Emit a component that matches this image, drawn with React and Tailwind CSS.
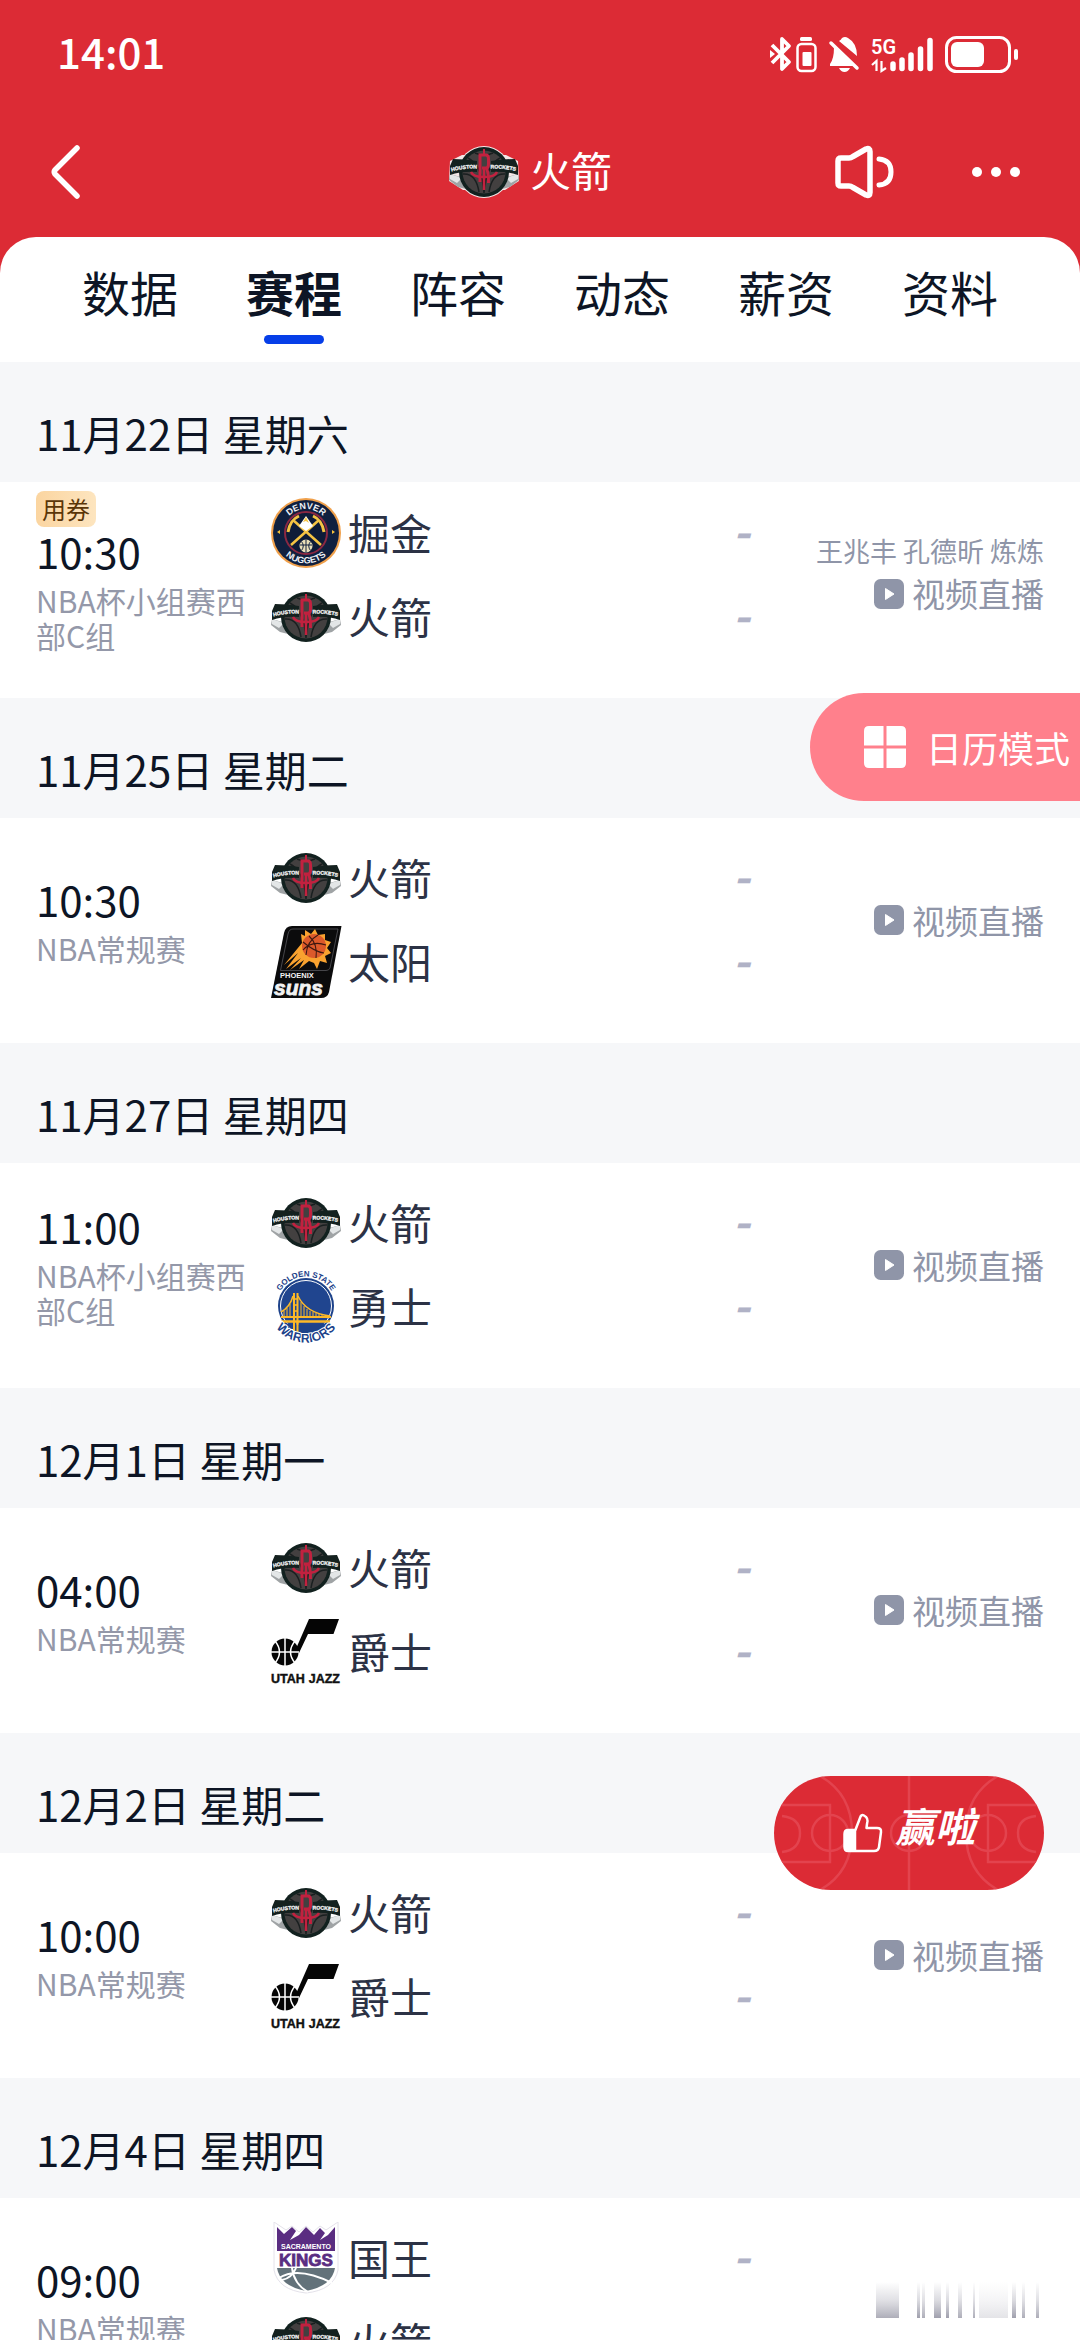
function RocketsLogo({ outlined = false }) {
  return (
    <svg viewBox="0 0 72 72" className="size-[72px] shrink-0" aria-hidden="true">
      {outlined && (
        <g fill="#f3e6e6">
          <circle cx="36" cy="36" r="26" />
          <path d="M2 25 L14 19 H58 L70 25 L71 45 L57 54 H15 L1 45 Z" />
        </g>
      )}
      <g transform="translate(0 1)">
        <path d="M2 37 L16 41 L18 52 L10 50 L1 43 Z" fill="#9fa3a5" />
        <path d="M70 37 L56 41 L54 52 L62 50 L71 43 Z" fill="#9fa3a5" />
        <path d="M2 37 L14 41 L9 46 L2 42 Z" fill="#e3e6e7" />
        <path d="M70 37 L58 41 L63 46 L70 42 Z" fill="#e3e6e7" />
        <circle cx="36" cy="35" r="25" fill="#12211f" />
        <circle cx="36" cy="35" r="21.500" fill="#434040" />
        <g fill="none" stroke="#1a1f20" strokeWidth="1.500">
          <path d="M20 21 Q34 28 36 56 M52 21 Q38 28 36 56 M15 37 Q28 36 31 55 M57 37 Q44 36 41 55 M27 16 Q36 20 45 16" />
        </g>
        <path d="M2 29 L5 22 Q17 22 29 24 V35 Q14 34 2 38 Z" fill="#14211f" />
        <path d="M70 29 L67 22 Q55 22 43 24 V35 Q58 34 70 38 Z" fill="#14211f" />
        <defs>
          <path id="houston" d="M3.500 34.500 Q16 31 31 31.500" />
          <path id="rockets" d="M42.500 31.500 Q56 31 70 34.500" />
        </defs>
        <g fill="#f4f5f5" stroke="#f4f5f5" strokeWidth="0.300" fontFamily="Liberation Sans, sans-serif" fontWeight="700" fontSize="5.200">
          <text><textPath href="#houston">HOUSTON</textPath></text>
          <text><textPath href="#rockets">ROCKETS</textPath></text>
        </g>
        <g fill="none" stroke="#c2213f">
          <path d="M32 45 V18 H38 Q40.500 18 40.500 22 V27 Q40.500 31 38 31 H34" strokeWidth="3" />
          <path d="M36 31 V53" strokeWidth="2.500" />
          <path d="M38 31 Q40.500 33 40.500 46" strokeWidth="3" />
          <path d="M23 35 Q25 40 36 40 Q47 40 49 35" strokeWidth="2.500" />
          <path d="M36 12 V18" strokeWidth="2" />
        </g>
      </g>
    </svg>
  );
}

function NuggetsLogo() {
  return (
    <svg viewBox="0 0 72 72" className="size-[72px] shrink-0" aria-hidden="true">
      <circle cx="36" cy="36" r="35" fill="#f0a04b" />
      <circle cx="36" cy="36" r="33" fill="#10203f" />
      <circle cx="36" cy="36" r="21" fill="#0e1c38" stroke="#8a2842" strokeWidth="2" />
      <defs>
        <path id="denver" d="M12 36 A24 24 0 0 1 60 36" />
        <path id="nuggets" d="M5.500 36 A30.500 30.500 0 0 0 66.500 36" />
      </defs>
      <g fill="#eef1f6" fontFamily="Liberation Sans, sans-serif" fontWeight="700" fontSize="9" textAnchor="middle">
        <text><textPath href="#denver" startOffset="50%">DENVER</textPath></text>
        <text><textPath href="#nuggets" startOffset="50%">NUGGETS</textPath></text>
      </g>
      <path d="M7 35 l3 -2 v4 z M65 35 l-3 -2 v4 z" fill="#f7c23c" />
      <g stroke="#f5c443" strokeWidth="2.500" fill="none">
        <path d="M21 48 L49 23 M51 48 L23 23" />
        <path d="M18 35 Q20 23 29 19" strokeWidth="3" />
        <path d="M54 35 Q52 23 43 19" strokeWidth="3" />
      </g>
      <path d="M29 29 L36 19 L43 29 L36 34 Z" fill="#fff" />
      <path d="M33 25 L36 20 L39 26 L36 24 Z" fill="#f5c443" />
      <circle cx="36" cy="49" r="6.500" fill="#e9dfb9" />
      <path d="M30 48 H42 M36 42.500 V55.500 M31.500 44.500 Q35 49 31.500 53.500 M40.500 44.500 Q37 49 40.500 53.500" stroke="#10203f" strokeWidth="1" fill="none" />
    </svg>
  );
}

function SunsLogo() {
  return (
    <svg viewBox="0 0 72 72" className="size-[72px] shrink-0" aria-hidden="true">
      <path d="M22 0 H71.500 L59 66 Q57.500 72 51 72 H1 L14 7 Q15.500 0 22 0 Z" fill="#0b0b0c" />
      <path d="M23 3 H68 L60 42 Q59 44.500 56 44.500 H10.500 L18 8 Q19 3 23 3 Z" fill="none" stroke="#55565a" strokeWidth="0.800" />
      <path d="M31 8 L32 17 L14 39 L28 27 L16 43 L31 32 L20 44 L34 34 L29 43 L39 35 L44 37 L47 43 L50 35 L57 37 L55 30 L61 27 L57 22 L61 16 L55 14 L55 8 L48 9 L45 3 L41 8 L35 4 L35 10 Z" fill="#f9a22f" />
      <circle cx="44" cy="20" r="12" fill="#dc5a2b" />
      <g fill="none" stroke="#3a1710" strokeWidth="1.100">
        <path d="M33 24 Q42 14 56 19 M36 29 Q37 15 48 9 M39 10 Q48 18 46 32 M33 16 Q45 26 54 27" />
      </g>
      <g fill="#f3f3f3" fontFamily="Liberation Sans, sans-serif" fontWeight="700">
        <text x="10" y="52" fontSize="7.500">PHOENIX</text>
        <text x="4" y="69" fontSize="21" fontStyle="italic" stroke="#f3f3f3" strokeWidth="0.800">suns</text>
      </g>
    </svg>
  );
}

function WarriorsLogo() {
  return (
    <svg viewBox="0 0 72 72" className="size-[72px] shrink-0" aria-hidden="true">
      <circle cx="36" cy="35" r="28" fill="#1d428a" />
      <circle cx="36" cy="35" r="25.500" fill="#20458f" stroke="#fff" strokeWidth="1" />
      <g stroke="#fdb927" fill="none">
        <path d="M24 22 V58 M27.500 22 V58" strokeWidth="2" />
        <path d="M24 28 H27 M24 34 H27 M24 40 H27" strokeWidth="1.500" />
        <path d="M11 46 H61" strokeWidth="2" />
        <path d="M11 50.500 H60" strokeWidth="2.500" />
        <path d="M23 25 Q20 36 11 41 M28 25 Q36 42 60 45" strokeWidth="1.500" />
        <path d="M14 40 V46 M17 37 V46 M20 33 V46 M31 31 V46 M34 35 V46 M37 38 V46 M40 40 V46 M43 41 V46 M46 42 V46 M49 43 V46 M52 44 V46" strokeWidth="1" />
      </g>
      <path d="M14 52 Q36 56 58 52 L53 57 Q36 66 19 57 Z" fill="#1d428a" />
      <path d="M24 50 V60 M27.500 50 V61" stroke="#fdb927" strokeWidth="2" />
      <defs>
        <path id="golden" d="M6.500 35 A29.500 29.500 0 0 1 65.500 35" />
        <path id="warriors" d="M-1 35 A37 36.500 0 0 0 73 35" />
      </defs>
      <g fill="#1d428a" textAnchor="middle" fontWeight="700">
        <text fontSize="8" fontFamily="Liberation Sans, sans-serif"><textPath href="#golden" startOffset="50%">GOLDEN STATE</textPath></text>
        <text fontSize="12.500" fontFamily="Liberation Sans, sans-serif" stroke="#fff" strokeWidth="2" paintOrder="stroke"><textPath href="#warriors" startOffset="50%">WARRIORS</textPath></text>
      </g>
    </svg>
  );
}

function JazzLogo() {
  return (
    <svg viewBox="0 0 72 72" className="size-[72px] shrink-0" aria-hidden="true">
      <path d="M39 3 H69 L63.500 18 H38 L29 37 Q27 35 25 35 Z" fill="#050505" />
      <circle cx="15" cy="36" r="13.500" fill="#050505" />
      <path d="M1 36 H29 M15 22 V50 M5 25 Q14 36 5 47 M25 25 Q16 36 25 47" stroke="#fff" strokeWidth="1.500" fill="none" />
      <g fill="#101010" fontFamily="Liberation Sans, sans-serif" fontWeight="700" fontSize="12.500" stroke="#101010" strokeWidth="0.400">
        <text x="1" y="67">UTAH</text>
        <text x="70" y="67" textAnchor="end">JAZZ</text>
      </g>
    </svg>
  );
}

function KingsLogo() {
  return (
    <svg viewBox="0 0 72 72" className="size-[72px] shrink-0" aria-hidden="true">
      <path d="M4 0 L16 8 L22 4 L29 10 L36 4 L43 10 L50 4 L56 8 L68 0 V48 Q64 68 36 71 Q8 68 4 48 Z" fill="#fff" stroke="#e4e2ea" strokeWidth="1" />
      <path d="M7 5 L14 12 L22 5 L26 9 L20 18 L29 13 L36 5 L44 13 L50 6 L55 11 L50 18 L58 13 L65 5 V29 H7 Z" fill="#5a2d81" />
      <g fontFamily="Liberation Sans, sans-serif" fontWeight="700" textAnchor="middle">
        <text x="36" y="27" fontSize="7" fill="#fff">SACRAMENTO</text>
        <text x="36" y="44" fontSize="17" fill="#5a2d81" stroke="#5a2d81" strokeWidth="0.800">KINGS</text>
      </g>
      <path d="M7 46 H65 Q62 64 36 69 Q10 64 7 46 Z" fill="#63727a" />
      <path d="M9 56 Q28 44 62 61 M22 46 Q24 62 38 70 M12 58 Q22 56 26 46" stroke="#fff" strokeWidth="2" fill="none" />
    </svg>
  );
}

function StatusIcons() {
  return (
    <svg viewBox="768 30 252 46" className="h-[46px] w-[252px]" aria-hidden="true">
      <path d="M772 44 L789 61 L782 68 V38 L789 45 L772 62" fill="none" stroke="#fff" strokeWidth="3.800" strokeLinejoin="round" />
      <path d="M770 49 L775 53 L770 57 Z" fill="#fff" />
      <rect x="800" y="36" width="12" height="4" rx="1.500" fill="#fff" />
      <rect x="797.500" y="43" width="18" height="27" rx="4" fill="none" stroke="#fff" strokeWidth="2.500" />
      <rect x="802.500" y="51" width="9" height="14" rx="1" fill="#fff" />
      <path d="M839 40 Q841 39 842 37 Q845 35 848 37 Q857 42 857 55 Z" fill="#fff" />
      <path d="M834 46 L855 65 H830 V63 Q834 58 834 46 Z" fill="#fff" />
      <path d="M839 67 H850 Q848 71 844.500 71 Q841 71 839 67 Z" fill="#fff" />
      <path d="M831 42 L857 67" stroke="#fff" strokeWidth="3.500" strokeLinecap="round" />
      <text x="871" y="53" fontSize="20" fontWeight="600" fill="#fff" fontFamily="Roboto, sans-serif">5G</text>
      <path d="M872 64 L876.500 60 V70 M886 67 L881.500 70 V60" fill="none" stroke="#fff" strokeWidth="2.200" />
      <g stroke="#fff" strokeWidth="5.500" strokeLinecap="round">
        <path d="M893 63 V67.500 M902 59 V67.500 M911 54 V67.500 M920.500 48 V67.500 M930 39.500 V67.500" />
      </g>
      <rect x="946.500" y="36.500" width="63" height="34" rx="10" fill="none" stroke="#fff" strokeWidth="3" />
      <rect x="951" y="41" width="33" height="25" rx="6" fill="#fff" />
      <rect x="1014" y="48" width="4" height="11" rx="2" fill="#fff" />
    </svg>
  );
}

function BackIcon() {
  return (
    <svg viewBox="0 0 32 56" className="h-[56px] w-[32px]" fill="none" stroke="#fff" strokeWidth="5.500" strokeLinecap="round" strokeLinejoin="round" aria-hidden="true">
      <path d="M27 4 L5 26 Q3.500 28 5 30 L27 52" />
    </svg>
  );
}

function SpeakerIcon() {
  return (
    <svg viewBox="0 0 60 56" className="h-[56px] w-[60px]" fill="none" stroke="#fff" strokeWidth="5.500" strokeLinecap="round" strokeLinejoin="round" aria-hidden="true">
      <path d="M7 14 H15 Q17 14 19 12.500 L32 5 Q36 3.500 36 7.500 V48.500 Q36 52.500 32 51 L19 43.500 Q17 42 15 42 H7 Q4 42 4 39 V17 Q4 14 7 14 Z" />
      <path d="M45 15 Q57 16 57 28 Q57 40 45 41" strokeWidth="5" />
    </svg>
  );
}

function PlayIcon() {
  return (
    <svg viewBox="0 0 30 30" className="size-[30px]" aria-hidden="true">
      <rect width="30" height="30" rx="6.500" fill="#8f95a8" />
      <path d="M11.500 9.500 L20 15 L11.500 20.500 Z" fill="#fff" stroke="#fff" strokeWidth="1" strokeLinejoin="round" />
    </svg>
  );
}

function CourtLines() {
  return (
    <svg viewBox="0 0 270 114" className="absolute inset-0 size-full" fill="none" stroke="#e3434e" strokeWidth="2.500" aria-hidden="true">
      <path d="M135 0 V114" />
      <circle cx="135" cy="57" r="18" />
      <path d="M0 29 H56 V86 H0 M46 0 Q78 18 78 57 Q78 96 46 114" />
      <path d="M8 40 Q26 42 26 57 Q26 74 8 76" />
      <circle cx="56" cy="57" r="18" />
      <path d="M270 29 H214 V86 H270 M224 0 Q192 18 192 57 Q192 96 224 114" />
      <path d="M262 40 Q244 42 244 57 Q244 74 262 76" />
      <circle cx="214" cy="57" r="18" />
    </svg>
  );
}

function ThumbIcon() {
  return (
    <svg viewBox="0 0 40 40" className="relative size-10" aria-hidden="true">
      <path d="M12 16 V38 H5 Q1 38 1 34 V20 Q1 16.500 5 16.500 Z" fill="#fff" />
      <path d="M12 38 V18 L17 5 Q18 1 21 2.500 Q26 5 24 11 L23.500 15 H34 Q38.500 15 38 19 L36 34 Q35.500 38 31 38 H5 Q1.500 38 1.500 34 V21 Q1.500 17 5 17 H12" fill="none" stroke="#fff" strokeWidth="2.500" strokeLinejoin="round" />
    </svg>
  );
}

// x, width, opacity
const faintBars = [
  [0, 23, 0.6], [41, 3, 0.7], [46, 3, 0.6], [58, 7, 0.7], [70, 3, 0.7], [82, 4, 0.6],
  [97, 2, 0.6], [103, 29, 0.2], [136, 4, 0.7], [146, 3, 0.6], [160, 3, 0.6],
];

function FadedLive() {
  return (
    <svg viewBox="0 0 168 36" className="h-9 w-[168px]" aria-hidden="true">
      <defs>
        <linearGradient id="fade" x1="0" y1="0" x2="0" y2="1">
          <stop offset="0" stopColor="#8f8f9f" stopOpacity="0" />
          <stop offset="0.500" stopColor="#8f8f9f" stopOpacity="0.450" />
          <stop offset="1" stopColor="#77778a" />
        </linearGradient>
      </defs>
      {faintBars.map(([x, w, o]) => (
        <rect key={x} x={x} y="0" width={w} height="36" fill="url(#fade)" opacity={o} />
      ))}
    </svg>
  );
}

const teams = {
  火箭: RocketsLogo,
  掘金: NuggetsLogo,
  太阳: SunsLogo,
  勇士: WarriorsLogo,
  爵士: JazzLogo,
  国王: KingsLogo,
};

const tabs = ['数据', '赛程', '阵容', '动态', '薪资', '资料'];

const games = [
  { date: '11月22日 星期六', time: '10:30', comp: 'NBA杯小组赛西部C组', teams: ['掘金', '火箭'], coupon: true, hosts: '王兆丰 孔德昕 炼炼' },
  { date: '11月25日 星期二', time: '10:30', comp: 'NBA常规赛', teams: ['火箭', '太阳'] },
  { date: '11月27日 星期四', time: '11:00', comp: 'NBA杯小组赛西部C组', teams: ['火箭', '勇士'] },
  { date: '12月1日 星期一', time: '04:00', comp: 'NBA常规赛', teams: ['火箭', '爵士'] },
  { date: '12月2日 星期二', time: '10:00', comp: 'NBA常规赛', teams: ['火箭', '爵士'] },
  { date: '12月4日 星期四', time: '09:00', comp: 'NBA常规赛', teams: ['国王', '火箭'], faded: true },
];

function Game({ game }) {
  return (
    <section>
      <h2 className="bg-[#f6f7f9] px-9 pt-[41px] pb-[19px] text-[42px] leading-[60px] text-[#0d1525]">{game.date}</h2>
      <div className={`flex items-stretch px-9 pb-[39px] ${game.coupon ? 'pt-[9px]' : 'pt-[18px]'}`}>
        <div className={`mr-[18px] flex w-[216px] shrink-0 flex-col justify-center ${game.coupon ? 'pb-1.5' : ''}`}>
          {game.coupon && (
            <span className="self-start rounded-lg bg-gradient-to-r from-[#fbd5a0] to-[#fde5bf] px-1.5 text-2xl leading-9 text-[#5b3608]">用券</span>
          )}
          <time className="mb-2 text-[42px] leading-[48px] text-[#0d1525]">{game.time}</time>
          <p className="text-[30px] leading-[35px] text-[#9498a9]">{game.comp}</p>
        </div>
        <div className="min-w-0 flex-1">
          {game.teams.map((name) => {
            const Logo = teams[name];
            return (
              <div key={name} className="flex h-[84px] items-center gap-1.5">
                <Logo />
                <span className="flex-1 pb-0.5 text-[42px] leading-[60px] text-[#2c3245]">{name}</span>
                <span className="w-[42px] pr-1 pb-2 text-center text-[46px] leading-[60px] font-bold text-[#b0b2c6] italic">-</span>
              </div>
            );
          })}
        </div>
        <div className={`flex w-[280px] shrink-0 flex-col items-end justify-center text-[#8f95a8] ${game.hosts ? 'pb-1.5' : ''}`}>
          {game.hosts && <p className="text-[27px] leading-[43px]">{game.hosts}</p>}
          {game.faded ? (
            <FadedLive />
          ) : (
            <a href="#live" className="flex items-center gap-2 text-[33px] leading-[43px]">
              <PlayIcon />
              视频直播
            </a>
          )}
        </div>
      </div>
    </section>
  );
}

export default function App() {
  return (
    <div className="flex h-screen flex-col overflow-hidden bg-[#dc2b35] font-['Noto_Sans_CJK_SC',sans-serif]">
      <header className="text-white">
        <div className="flex h-[108px] items-center justify-between pr-[60px] pl-[57px]">
          <span className="pb-1.5 text-[42px] leading-[60px] font-medium">14:01</span>
          <StatusIcons />
        </div>
        <div className="grid h-[127px] grid-cols-3 items-center px-[50px]">
          <button type="button" aria-label="返回" className="justify-self-start"><BackIcon /></button>
          <h1 className="flex items-center justify-center gap-2.5 pr-5 text-[41px] leading-[60px]">
            <RocketsLogo outlined />
            <span className="pb-1.5">火箭</span>
          </h1>
          <div className="flex items-center gap-[78px] justify-self-end pr-2.5">
            <button type="button" aria-label="播报"><SpeakerIcon /></button>
            <button type="button" aria-label="更多">
              <svg viewBox="0 0 48 12" className="h-3 w-12" fill="#fff" aria-hidden="true">
                <circle cx="5" cy="6" r="5" />
                <circle cx="24" cy="6" r="5" />
                <circle cx="43" cy="6" r="5" />
              </svg>
            </button>
          </div>
        </div>
      </header>

      <nav className="mt-0.5 grid h-[125px] shrink-0 grid-cols-6 rounded-t-[36px] bg-white px-12 pt-5">
        {tabs.map((tab) => (
          <button key={tab} type="button"
            className={`flex flex-col items-center text-[48px] leading-[68px] text-[#0d1525] ${tab === '赛程' ? 'font-bold' : ''}`}>
            {tab}
            {tab === '赛程' && <span className="mt-2.5 h-[9px] w-[60px] rounded-full bg-[#063ee8]" />}
          </button>
        ))}
      </nav>

      <main className="min-h-0 flex-1 overflow-y-auto bg-white [scrollbar-width:none]">
        {games.map((game) => <Game key={game.date} game={game} />)}
      </main>

      <button type="button" className="fixed top-[693px] right-0 flex h-[108px] items-center gap-5 rounded-l-full bg-[#ff808c] pr-2.5 pl-[54px] text-[36px] text-white">
        <svg viewBox="0 0 42 42" className="size-[42px]" aria-hidden="true">
          <path d="M5 0 H19.500 V19.500 H0 V5 Q0 0 5 0 Z M22.500 0 H37 Q42 0 42 5 V19.500 H22.500 Z M0 22.500 H19.500 V42 H5 Q0 42 0 37 Z M22.500 22.500 H42 V37 Q42 42 37 42 H22.500 Z" fill="#fff" />
        </svg>
        日历模式
      </button>

      <button type="button" className="fixed right-9 bottom-[450px] flex h-[114px] w-[270px] items-center justify-center gap-3 overflow-hidden rounded-full bg-[#dc2b35] text-[40px] leading-[60px] text-white">
        <CourtLines />
        <ThumbIcon />
        <span className="relative pb-4 font-bold italic">赢啦</span>
      </button>
    </div>
  );
}
